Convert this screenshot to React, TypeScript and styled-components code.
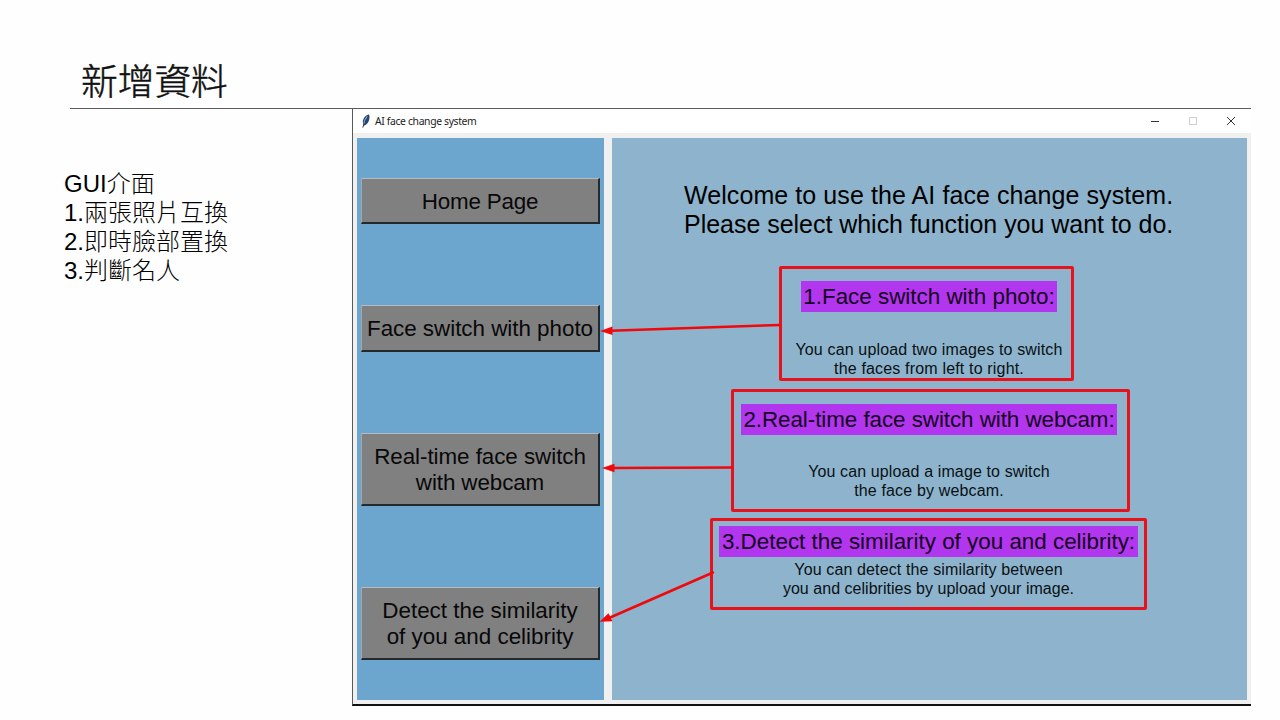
import React from 'react';
import styled, { createGlobalStyle } from 'styled-components';

const Global = createGlobalStyle`
  * { box-sizing: border-box; }
  body { margin: 0; background: #fff; }
`;

const Slide = styled.main`
  position: relative;
  width: 1280px;
  height: 720px;
  overflow: hidden;
  background: #fefefe;
  font-family: 'Liberation Sans', 'Noto Sans CJK TC', sans-serif;
  color: #000;
`;

const SlideHeader = styled.header`
  height: 109px;
  margin: 0 29px 0 70px;
  padding: 53px 0 0 11px;
  display: flex;
`;

const SlideTitle = styled.h1`
  margin: 0;
  font: 300 36.7px/52px 'Noto Sans CJK TC', sans-serif;
  color: #111;
  -webkit-text-stroke: 0.5px #111;
`;

const Rule = styled.div`
  height: 1px;
  margin: -1px 29px 0 70px;
  background: #5c5c5c;
`;

const Content = styled.div`
  display: flex;
`;

const Notes = styled.section`
  width: 352px;
  padding: 60px 0 0 64px;
  font-size: 24px;
  font-weight: 300;
  line-height: 29px;
`;

const NoteLine = styled.div`
  height: 29px;
  white-space: nowrap;
`;

const AppWindow = styled.section`
  width: 899px;
  height: 597px;
  display: flex;
  flex-direction: column;
  border-left: 1px solid #5a5a5a;
  border-bottom: 2px solid #111;
  background: #f0f0f0;
`;

const TitleBar = styled.div`
  height: 24px;
  display: flex;
  align-items: center;
  padding: 0 14px 0 8px;
  background: #fff;
`;

const WindowName = styled.span`
  flex: 1;
  margin-left: 4px;
  font: 10.4px/20px 'Noto Sans', sans-serif;
  letter-spacing: -0.36px;
  color: #1c1c1c;
`;

const Controls = styled.div`
  display: flex;
  gap: 26px;
`;

const Panels = styled.div`
  flex: 1;
  display: flex;
  gap: 8px;
  padding: 5px 4px 4px 4px;
`;

const Sidebar = styled.nav`
  width: 247px;
  padding: 40px 4px 0;
  background: #6ca5cd;
`;

const NavButton = styled.button<{ $height: number; $gap: number }>`
  display: flex;
  flex-direction: column;
  align-items: center;
  justify-content: center;
  width: 239px;
  height: ${(p) => p.$height}px;
  margin: 0 0 ${(p) => p.$gap}px;
  padding: 2px 0 0;
  border: solid;
  border-width: 1px 2px 2px 1px;
  border-color: #b4bcc0 #24292c #24292c #a2a8ac;
  background: #808080;
  color: #080808;
  font: 22.4px/26px 'Liberation Sans', sans-serif;
`;

const Line = styled.span<{ $spacing?: number }>`
  display: block;
  white-space: nowrap;
  letter-spacing: ${(p) => p.$spacing ?? 0}px;
`;

const Main = styled.section`
  flex: 1;
  padding-top: 43px;
  background: #8db4cc;
`;

const Welcome = styled.div`
  height: 85px;
  padding-left: 72px;
  font-size: 25px;
  line-height: 29px;
`;

const Callout = styled.article<{ $left: number; $width: number; $height: number; $gap: number; $pad: string }>`
  display: flex;
  flex-direction: column;
  align-items: center;
  width: ${(p) => p.$width}px;
  height: ${(p) => p.$height}px;
  margin: 0 0 ${(p) => p.$gap}px ${(p) => p.$left}px;
  padding: ${(p) => p.$pad};
  border: 3px solid #e8131a;
  border-radius: 2px;
`;

const Heading = styled.h2<{ $width: number }>`
  display: flex;
  justify-content: center;
  flex: none;
  width: ${(p) => p.$width}px;
  height: 31px;
  margin: 0;
  background: #b136ee;
  color: #14001c;
  font-size: 22.4px;
  font-weight: 400;
  line-height: 32px;
`;

const Description = styled.div<{ $top: number }>`
  margin-top: ${(p) => p.$top}px;
  font-size: 16px;
  line-height: 19px;
  color: #0a1014;
  display: flex;
  flex-direction: column;
  align-items: center;
`;

const Arrows = styled.svg`
  position: absolute;
  left: 0;
  top: 0;
  pointer-events: none;
`;

const Feather = () => (
  <svg width="10" height="14" viewBox="0 0 10 14">
    <path d="M1.8 13.5L3 10" stroke="#333" strokeWidth="1" />
    <path d="M8 .5C5 1 2.2 3.8 1.8 7.5L2.2 11.8C5.4 11.3 7.6 8.5 8.2 5.5C8.6 3.5 8.7 2 8 .5Z" fill="#27446a" />
    <path d="M6.3 2.4C4.2 4.4 3.2 6.8 2.8 9.6" stroke="#7ea3d6" strokeWidth="1.3" fill="none" />
  </svg>
);

const notes = ['GUI介面', '1.兩張照片互換', '2.即時臉部置換', '3.判斷名人'];

export default function App() {
  return (
    <>
      <Global />
      <Slide>
        <SlideHeader>
          <SlideTitle>新增資料</SlideTitle>
        </SlideHeader>
        <Rule />
        <Content>
          <Notes>
            {notes.map((n) => (
              <NoteLine key={n}>{n}</NoteLine>
            ))}
          </Notes>
          <AppWindow>
            <TitleBar>
              <Feather />
              <WindowName>AI face change system</WindowName>
              <Controls>
                <svg width="12" height="12" viewBox="0 0 12 12">
                  <path d="M2 6.5H10" stroke="#333" />
                </svg>
                <svg width="12" height="12" viewBox="0 0 12 12">
                  <rect x="2.5" y="2.5" width="7" height="7" fill="none" stroke="#d0d0d0" />
                </svg>
                <svg width="12" height="12" viewBox="0 0 12 12">
                  <path d="M2 2L10 10M10 2L2 10" stroke="#333" />
                </svg>
              </Controls>
            </TitleBar>
            <Panels>
              <Sidebar>
                <NavButton $height={46} $gap={81}>
                  <Line $spacing={-0.2}>Home Page</Line>
                </NavButton>
                <NavButton $height={47} $gap={81}>
                  <Line $spacing={-0.02}>Face switch with photo</Line>
                </NavButton>
                <NavButton $height={73} $gap={81}>
                  <Line $spacing={-0.05}>Real-time face switch</Line>
                  <Line $spacing={-0.1}>with webcam</Line>
                </NavButton>
                <NavButton $height={73} $gap={0}>
                  <Line>Detect the similarity</Line>
                  <Line>of you and celibrity</Line>
                </NavButton>
              </Sidebar>
              <Main>
                <Welcome>
                  <Line $spacing={0.08}>Welcome to use the AI face change system.</Line>
                  <Line $spacing={-0.03}>Please select which function you want to do.</Line>
                </Welcome>
                <Callout $left={167} $width={295} $height={115} $gap={8} $pad="12px 0 0 5px">
                  <Heading $width={256}>
                    <Line>1.Face switch with photo:</Line>
                  </Heading>
                  <Description $top={28}>
                    <Line $spacing={0.15}>You can upload two images to switch</Line>
                    <Line $spacing={0.17}>the faces from left to right.</Line>
                  </Description>
                </Callout>
                <Callout $left={119} $width={399} $height={123} $gap={6} $pad="12px 3px 0 0">
                  <Heading $width={376}>
                    <Line $spacing={-0.06}>2.Real-time face switch with webcam:</Line>
                  </Heading>
                  <Description $top={27}>
                    <Line $spacing={0.12}>You can upload a image to switch</Line>
                    <Line $spacing={0.15}>the face by webcam.</Line>
                  </Description>
                </Callout>
                <Callout $left={98} $width={437} $height={92} $gap={0} $pad="5px 0 0 0">
                  <Heading $width={419}>
                    <Line>3.Detect the similarity of you and celibrity:</Line>
                  </Heading>
                  <Description $top={3}>
                    <Line $spacing={0.13}>You can detect the similarity between</Line>
                    <Line $spacing={0.03}>you and celibrities by upload your image.</Line>
                  </Description>
                </Callout>
              </Main>
            </Panels>
          </AppWindow>
        </Content>
        <Arrows width="1280" height="720" viewBox="0 0 1280 720">
          <g stroke="#f0080c" strokeWidth="2.5" strokeLinecap="round">
            <path d="M780 325L610 330.7" />
            <path d="M732 467.5L612 468" />
            <path d="M713 572.5L609 618" />
          </g>
          <g fill="#f0080c">
            <path d="M600 331L612.5 326.5V335Z" />
            <path d="M602 468L614.5 463.8V472.3Z" />
            <path d="M599.5 621.8L608.5 613.3L612.5 621.3Z" />
          </g>
        </Arrows>
      </Slide>
    </>
  );
}
